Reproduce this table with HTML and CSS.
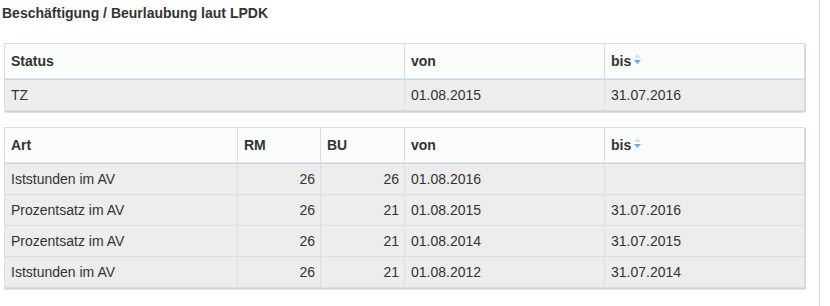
FILE: index.html
```html
<!DOCTYPE html>
<html lang="de">
<head>
<meta charset="utf-8">
<title>Beschäftigung / Beurlaubung laut LPDK</title>
<link rel="stylesheet" href="styles.css">
</head>
<body>
<div class="panel">
  <h3 class="title">Beschäftigung / Beurlaubung laut LPDK</h3>
  <table class="tbl tbl-status">
    <colgroup><col class="c-status"><col class="c-date"><col class="c-date"></colgroup>
    <thead>
      <tr><th>Status</th><th>von</th><th>bis<svg class="sort" width="7" height="10" viewBox="0 0 7 10"><path class="up" d="M0 4L3.5 0L7 4Z"/><path class="down" d="M0 6L7 6L3.5 10Z"/></svg></th></tr>
    </thead>
    <tbody>
      <tr><td>TZ</td><td>01.08.2015</td><td>31.07.2016</td></tr>
    </tbody>
  </table>
  <table class="tbl tbl-art">
    <colgroup><col class="c-art"><col class="c-rm"><col class="c-bu"><col class="c-date"><col class="c-date"></colgroup>
    <thead>
      <tr><th>Art</th><th>RM</th><th>BU</th><th>von</th><th>bis<svg class="sort" width="7" height="10" viewBox="0 0 7 10"><path class="up" d="M0 4L3.5 0L7 4Z"/><path class="down" d="M0 6L7 6L3.5 10Z"/></svg></th></tr>
    </thead>
    <tbody>
      <tr><td>Iststunden im AV</td><td class="num">26</td><td class="num">26</td><td>01.08.2016</td><td></td></tr>
      <tr><td>Prozentsatz im AV</td><td class="num">26</td><td class="num">21</td><td>01.08.2015</td><td>31.07.2016</td></tr>
      <tr><td>Prozentsatz im AV</td><td class="num">26</td><td class="num">21</td><td>01.08.2014</td><td>31.07.2015</td></tr>
      <tr><td>Iststunden im AV</td><td class="num">26</td><td class="num">21</td><td>01.08.2012</td><td>31.07.2014</td></tr>
    </tbody>
  </table>
</div>
</body>
</html>
```
FILE: styles.css
```css
html, body {
  margin: 0;
  padding: 0;
  background: #ffffff;
}
body {
  font-family: "Liberation Sans", Arial, sans-serif;
  font-size: 14px;
  line-height: 20px;
  color: #333333;
}
.panel {
  width: 820px;
  height: 306px;
  box-sizing: border-box;
  border-right: 1px solid #dddddd;
  padding-top: 3px;
}
.title {
  margin: 0 0 20px 2px;
  font-size: 14px;
  line-height: 20px;
  font-weight: bold;
}
.tbl {
  margin-left: 4px;
  width: 801px;
  table-layout: fixed;
  border-collapse: separate;
  border-spacing: 0;
  border: 1px solid #dddddd;
  box-shadow: 1px 1px 0 #d4d4d4, 0 2px 0 #e2e2e2;
  margin-bottom: 16px;
}
.c-status { width: 399px; }
.c-date { width: 200px; }
.c-art { width: 232px; }
.c-rm { width: 83px; }
.c-bu { width: 84px; }
.tbl th, .tbl td {
  box-sizing: border-box;
  text-align: left;
  vertical-align: top;
  white-space: nowrap;
  overflow: hidden;
}
.tbl th {
  background: #fbfcfc;
  font-weight: bold;
  padding: 7px 5px 7px 6px;
  border-bottom: 1px solid #dce7f0;
  border-left: 1px solid #dddddd;
}
.tbl td {
  background: #ededed;
  padding: 5px 5px 5px 6px;
  border-top: 1px solid #dddddd;
  border-left: 1px solid #dddddd;
}
.tbl th:first-child, .tbl td:first-child {
  border-left: none;
}
.tbl tbody tr:first-child td {
  border-top-color: #c5d8e9;
}
.tbl td.num {
  text-align: right;
}
.sort {
  margin-left: 3px;
  vertical-align: 2px;
}
.sort .up { fill: #d3e2ef; }
.sort .down { fill: #79a8d3; }
```
